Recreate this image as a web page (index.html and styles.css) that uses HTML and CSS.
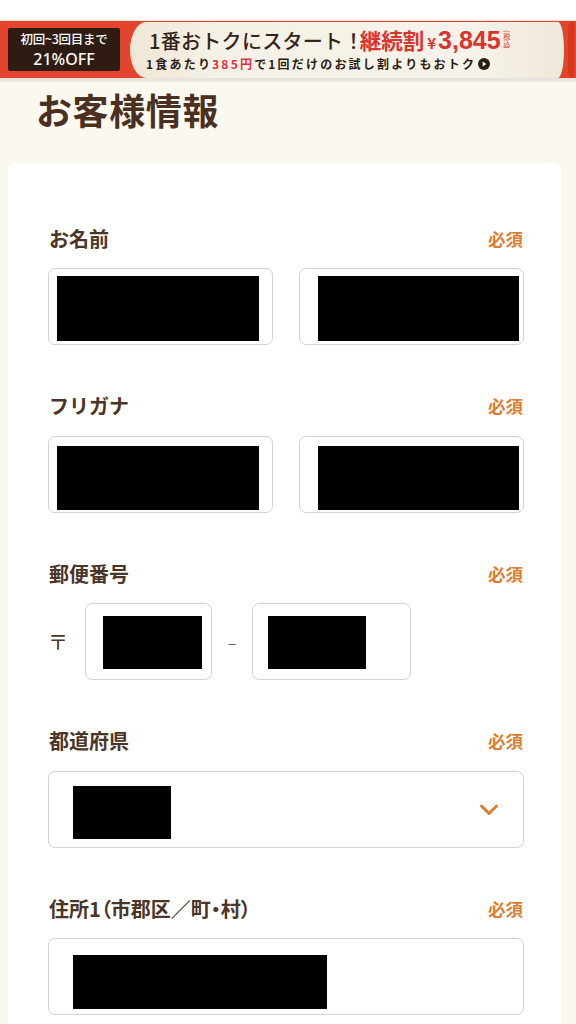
FILE: index.html
```html
<!DOCTYPE html>
<html lang="ja">
<head>
<meta charset="utf-8">
<link rel="stylesheet" href="styles.css">
</head>
<body>
<div class="topgap"></div>
<div class="banner">
  <div class="badge">
    <span class="badge-l1">初回~3回目まで</span>
    <span class="badge-l2">21%OFF</span>
  </div>
  <div class="panel">
    <div class="line1">
      <span class="l1-main">1番おトクにスタート！</span>
      <span class="l1-red">継続割</span><span class="yen">¥</span><span class="price">3,845</span><span class="tax">(税込)</span>
    </div>
    <div class="line2">1食あたり<span class="red">385円</span>で1回だけのお試し割よりもおトク<span class="play"><svg viewBox="0 0 12 12" width="12" height="12"><circle cx="6" cy="6" r="6" fill="#2a1d15"/><path d="M4.6 3.6 L8.4 6 L4.6 8.4 Z" fill="#fff"/></svg></span></div>
  </div>
  <div class="edge"></div>
</div>
<div class="divider"></div>
<main class="page">
  <h1 class="title">お客様情報</h1>
  <section class="card">
    <div class="field">
      <div class="label-row"><span class="label">お名前</span><span class="req">必須</span></div>
      <div class="pair">
        <div class="input name-l"><span class="mask"></span></div>
        <div class="input name-r"><span class="mask"></span></div>
      </div>
    </div>
    <div class="field">
      <div class="label-row"><span class="label">フリガナ</span><span class="req">必須</span></div>
      <div class="pair">
        <div class="input name-l kana"><span class="mask"></span></div>
        <div class="input name-r kana"><span class="mask"></span></div>
      </div>
    </div>
    <div class="field">
      <div class="label-row"><span class="label">郵便番号</span><span class="req">必須</span></div>
      <div class="postal">
        <span class="zip-mark">〒</span>
        <div class="input zip1"><span class="mask"></span></div>
        <span class="dash">–</span>
        <div class="input zip2"><span class="mask"></span></div>
      </div>
    </div>
    <div class="field">
      <div class="label-row"><span class="label">都道府県</span><span class="req">必須</span></div>
      <div class="input select"><span class="mask"></span>
        <svg class="chev" viewBox="0 0 20 14" width="20" height="14"><path d="M2.5 3 L10 10.5 L17.5 3" fill="none" stroke="#dc7d2e" stroke-width="3" stroke-linecap="round" stroke-linejoin="round"/></svg>
      </div>
    </div>
    <div class="field">
      <div class="label-row"><span class="label label-tight">住所1（市郡区／町・村）</span><span class="req">必須</span></div>
      <div class="input addr"><span class="mask"></span></div>
    </div>
  </section>
</main>
</body>
</html>
```
FILE: styles.css
```css
* { box-sizing: border-box; }
html, body { margin: 0; padding: 0; }
body {
  background: #faf8ef;
  font-family: "Noto Sans CJK JP", "Noto Sans", sans-serif;
  color: #4a3324;
  width: 576px;
  overflow: hidden;
}
.topgap { height: 20px; background: #ffffff; }
.banner {
  height: 58px;
  background: #e2442e;
  display: flex;
  align-items: center;
  border-top: 1px solid #e8e2d8;
}
.badge {
  margin-left: 8px;
  width: 112px;
  height: 43px;
  background: #2e1c12;
  border-radius: 2px;
  display: flex;
  flex-direction: column;
  align-items: center;
  justify-content: center;
  color: #fff;
}
.badge-l1 { font-size: 12.5px; line-height: 19px; font-weight: 500; letter-spacing: -0.3px; }
.badge-l2 { font-size: 16px; line-height: 22px; font-weight: 500; font-family: "Noto Sans", sans-serif; }
.panel {
  margin-left: 10px;
  width: 434px;
  height: 56px;
  background: linear-gradient(90deg, #efe7d6 0%, #f6f1e6 20%, #f7f3ea 80%, #efe8d9 100%);
  border-radius: 16px 6px 6px 16px / 28px 28px 28px 28px;
  display: flex;
  flex-direction: column;
  justify-content: flex-start;
  padding: 3px 0 0 19px;
}
.line1 {
  display: flex;
  align-items: baseline;
  height: 30px;
  line-height: 30px;
  white-space: nowrap;
}
.l1-main { font-size: 20px; font-weight: 500; color: #33241a; letter-spacing: 0.3px; }
.l1-red { font-size: 21.5px; font-weight: 700; color: #d9352e; margin-left: -4px; }
.yen { font-size: 15px; font-weight: 700; color: #d9352e; margin-left: 3px; }
.price { font-size: 25px; font-weight: 700; color: #d9352e; font-family: "Liberation Sans", Arial, sans-serif; margin-left: 2px; }
.tax { font-size: 7px; line-height: 7px; color: #d9352e; writing-mode: vertical-rl; margin-left: 2px; align-self: center; }
.line2 {
  display: flex;
  align-items: center;
  font-size: 12px;
  line-height: 18px;
  font-weight: 700;
  color: #2a1d15;
  letter-spacing: 2.2px;
  white-space: nowrap;
  height: 18px;
  margin-left: -3px;
}
.red { color: #e0303f; }
.play { display: inline-flex; margin-left: 2px; }
.edge {
  margin-left: 4px;
  width: 6px;
  height: 56px;
  background: #d8381f;
  border-radius: 6px 0 0 6px;
}
.divider { height: 4px; background: linear-gradient(#e3e0d9, #f1eee6); }
.page { padding: 0 15px 0 8px; }
.title {
  margin: 0;
  padding: 3px 0 0 28px;
  height: 81px;
  font-size: 36px;
  line-height: 48px;
  font-weight: 700;
  color: #4a3020;
  letter-spacing: 0.6px;
}
.card {
  background: #ffffff;
  border-radius: 8px;
  padding: 61px 37px 40px 40px;
}
.field { margin-bottom: 46.5px; }
.label-row {
  display: flex;
  justify-content: space-between;
  align-items: center;
  height: 28px;
  margin-bottom: 16px;
}
.label { font-size: 20px; font-weight: 700; color: #4a3526; padding-left: 1px; }
.label-tight { font-feature-settings: "palt"; }
.req { font-size: 17.5px; font-weight: 700; color: #dc7f32; padding-right: 1px; }
.input {
  height: 77px;
  border: 1.5px solid #d2d2d2;
  border-radius: 7px;
  background: #fff;
  display: flex;
  align-items: flex-start;
}
.mask { display: block; background: #000; }
.pair { display: flex; gap: 26px; }
.pair .input { width: 225px; }
.name-l .mask { margin: 7px 0 0 8px; width: 202px; height: 65px; }
.name-r .mask { margin: 7px 0 0 18px; width: 201px; height: 65px; }
.kana .mask { margin-top: 9px; height: 64px; }
.postal { display: flex; align-items: center; }
.zip-mark { font-size: 20px; font-weight: 400; color: #4a3526; width: 37px; }
.zip1 { width: 127px; }
.zip1 .mask { margin: 12px 0 0 17px; width: 99px; height: 53px; }
.dash { width: 40px; text-align: center; font-size: 16px; color: #666; }
.zip2 { width: 159px; }
.zip2 .mask { margin: 12px 0 0 15px; width: 98px; height: 53px; }
.select { justify-content: space-between; }
.select .mask { margin: 14px 0 0 24px; width: 98px; height: 53px; }
.chev { margin: 31px 24px 0 0; }
.addr .mask { margin: 16px 0 0 24px; width: 254px; height: 54px; }
```
